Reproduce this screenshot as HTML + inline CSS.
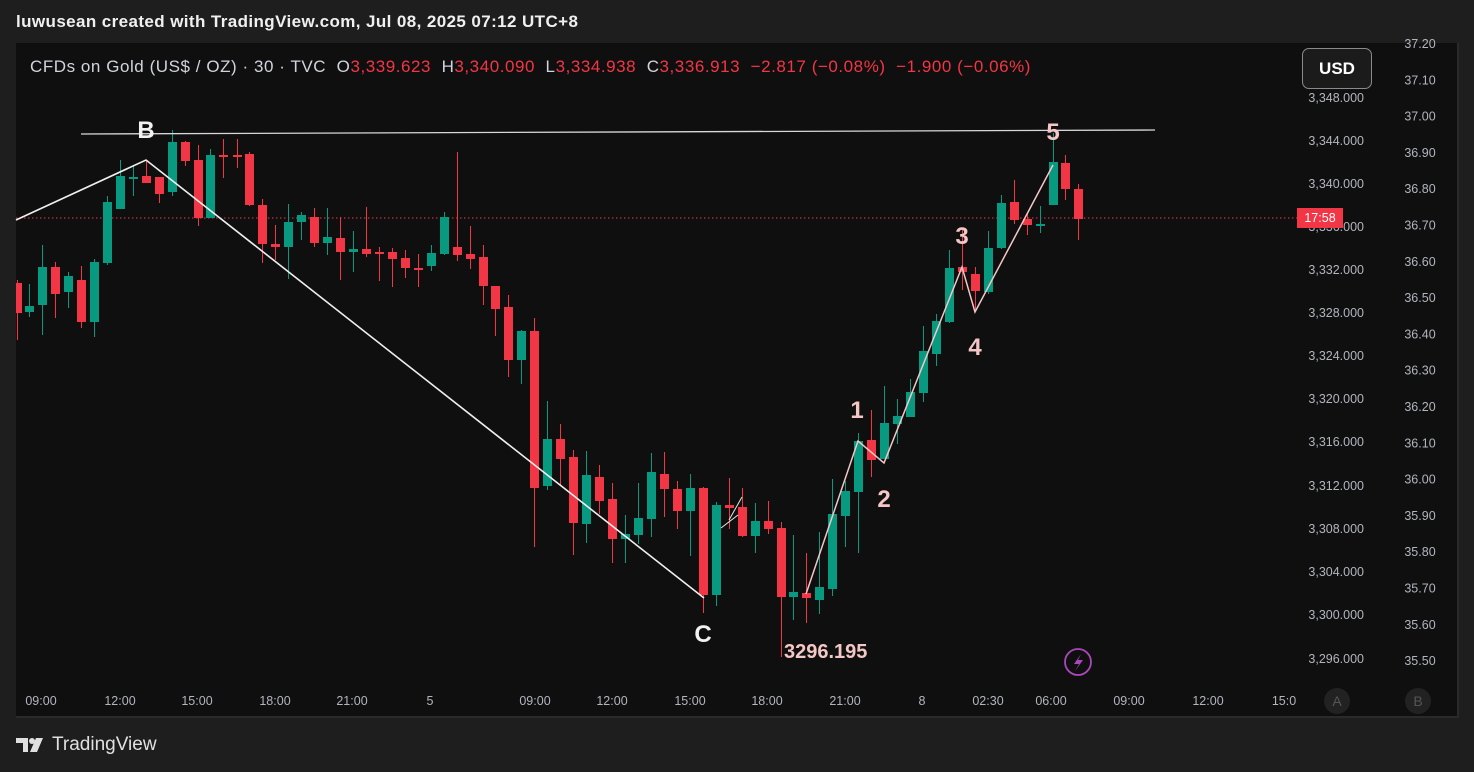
<!DOCTYPE html>
<html><head><meta charset="utf-8">
<style>
html,body{margin:0;padding:0;background:#1e1e1e;width:1474px;height:772px;overflow:hidden;font-family:"Liberation Sans",sans-serif}
#hdr{position:absolute;left:16px;top:12px;color:#f0f0f0;font-size:17px;font-weight:bold;letter-spacing:0.4px;white-space:nowrap}
#panel{position:absolute;left:16px;top:43px;width:1441px;height:673px;background:#0f0f0f;border-right:2px solid #2a2a2a;border-bottom:2px solid #2a2a2a}
#sym{position:absolute;left:30px;top:57px;color:#d1d4dc;font-size:17px;white-space:nowrap;letter-spacing:0.55px}
#sym .r{color:#f23645}
#usd{position:absolute;left:1302px;top:48px;width:68px;height:39px;border:1.5px solid #8a8a8a;border-radius:7px;background:#1b1b1b;color:#fff;font-weight:bold;font-size:17px;text-align:center;line-height:39px}
#logo{position:absolute;left:16px;top:734px;color:#e0e0e0;font-size:19px;display:flex;align-items:center;gap:6px}
svg{position:absolute;left:0;top:0}
</style></head><body>
<div id="hdr">luwusean created with TradingView.com, Jul 08, 2025 07:12 UTC+8</div>
<div id="panel"></div>
<svg id="s" width="1474" height="772" xmlns="http://www.w3.org/2000/svg"></svg>
<div id="sym">CFDs on Gold (US$ / OZ) · 30 · TVC &nbsp;O<span class="r">3,339.623</span> &nbsp;H<span class="r">3,340.090</span> &nbsp;L<span class="r">3,334.938</span> &nbsp;C<span class="r">3,336.913</span> &nbsp;<span class="r">−2.817 (−0.08%) &nbsp;−1.900 (−0.06%)</span></div>
<div id="usd">USD</div>
<div id="logo"><svg width="30" height="18" viewBox="0 0 30 18" style="position:static"><path d="M0 2h12v14H7V7H0z" fill="#e0e0e0"/><circle cx="16" cy="5" r="3" fill="#e0e0e0"/><path d="M20 2h7l-6 14h-7z" fill="#e0e0e0"/></svg><span>TradingView</span></div>
<script>
var G="#089981",R="#f23645";
var c=[
[17,'r',280,340,283,313],[29,'g',284,317,306,312],[42,'g',245,335,267,305],[55,'r',262,318,267,294],[68,'g',272,308,276,292],[81,'r',266,328,280,322],[94,'g',259,337,262,322],[107,'g',196,265,202,263],[120,'g',160,209,176,209],[133,'g',165,196,177,178],[146,'r',160,183,176,183],[159,'r',177,203,177,194],[172,'g',130,196,142,192],[185,'r',141,166,142,161],[198,'r',145,226,160,218],[210,'g',149,218,155,218],[223,'r',139,178,155,156],[237,'r',139,168,155,156],[249,'r',152,206,154,205],[262,'r',199,263,205,244],[275,'r',225,260,244,247],[288,'g',204,279,222,247],[301,'g',212,240,215,222],[314,'r',208,247,217,243],[327,'g',208,255,237,243],[340,'r',217,280,238,252],[353,'g',231,272,249,252],[366,'r',207,257,249,254],[379,'r',247,281,252,253],[392,'r',248,287,252,259],[405,'r',250,278,258,268],[418,'r',254,287,268,269],[431,'g',245,271,253,266],[444,'g',212,255,217,254],[457,'r',152,261,247,255],[470,'r',226,269,254,259],[483,'r',245,305,257,286],[495,'r',286,336,286,309],[508,'r',295,377,307,360],[521,'g',330,384,331,360],[534,'r',318,547,331,488],[547,'g',401,490,439,486],[560,'r',424,485,439,459],[573,'r',450,555,457,523],[586,'g',451,543,475,524],[599,'r',465,514,477,501],[612,'r',483,563,499,539],[625,'g',515,563,534,539],[638,'g',483,544,518,535],[651,'g',453,537,472,519],[664,'r',452,517,474,489],[677,'r',481,529,489,511],[690,'g',474,556,488,511],[703,'r',487,613,488,595],[716,'g',502,606,505,595],[729,'r',478,529,505,508],[742,'r',488,537,507,536],[755,'g',503,553,521,536],[768,'r',501,534,521,529],[781,'r',522,657,528,597],[793,'g',535,620,592,597],[806,'r',553,623,593,598],[819,'g',532,614,587,600],[832,'g',479,596,514,589],[845,'g',481,547,491,516],[858,'g',433,553,441,492],[871,'r',410,477,440,460],[884,'g',386,459,423,459],[897,'g',399,444,416,424],[910,'g',379,417,392,417],[923,'g',326,402,351,393],[936,'g',314,366,321,354],[949,'g',250,323,268,322],[962,'r',230,290,267,272],[975,'r',267,312,274,291],[988,'g',231,294,248,292],[1001,'g',195,249,203,248],[1014,'r',180,224,202,220],[1027,'r',213,235,219,225],[1040,'g',206,233,224,225],[1053,'g',133,205,162,205],[1065,'r',155,200,163,189],[1078,'r',184,240,189,219]];
var h='';
function t(x,y,s,f,sz,a,w){h+='<text x="'+x+'" y="'+y+'" fill="'+f+'" font-size="'+sz+'" font-family="Liberation Sans, sans-serif" text-anchor="'+(a||'start')+'"'+(w?' font-weight="bold"':'')+'>'+s+'</text>';}
h+='<line x1="16" y1="218" x2="1298" y2="218" stroke="#f23645" stroke-width="1" stroke-dasharray="1.5 2.5"/>';
c.forEach(function(k){var col=k[1]=='g'?G:R;var x=k[0];var lw=x<20?6:9;
h+='<line x1="'+(x+0.5)+'" y1="'+k[2]+'" x2="'+(x+0.5)+'" y2="'+k[3]+'" stroke="'+col+'" stroke-width="1"/>';
var bx=x<20?16:x-4;h+='<rect x="'+bx+'" y="'+k[4]+'" width="'+lw+'" height="'+Math.max(2,k[5]-k[4])+'" fill="'+col+'"/>';});
h+='<line x1="81" y1="134" x2="1155" y2="130" stroke="#d8d8d8" stroke-width="1.3"/>';
h+='<polyline points="16,220 146,160 704,598" fill="none" stroke="#f0f0f0" stroke-width="1.6"/>';
h+='<polyline points="721,528 738,515" fill="none" stroke="#e8e8e8" stroke-width="1"/><polyline points="729,520 742,497" fill="none" stroke="#e8e8e8" stroke-width="1"/>';
h+='<polyline points="806,594 858,441 884,463 962,267 975,312 1053,165" fill="none" stroke="#f5c6c6" stroke-width="1.5"/>';
t(146,138,'B','#f2f2f2',24,'middle',1);t(703,642,'C','#f2f2f2',24,'middle',1);
t(857,418,'1','#f5c6c6',24,'middle',1);t(884,507,'2','#f5c6c6',24,'middle',1);t(962,244,'3','#f5c6c6',24,'middle',1);t(975,355,'4','#f5c6c6',24,'middle',1);t(1053,140,'5','#f5c6c6',24,'middle',1);
t(784,658,'3296.195','#f5c6c6',20,'start',1);
h+='<circle cx="1078" cy="662" r="13" fill="none" stroke="#ab47bc" stroke-width="1.8"/><path d="M1081 654 L1074 664 L1079 664 L1075 671 L1083 660 L1078 660 Z" fill="#ab47bc"/>';
var p=[['3,348.000',98],['3,344.000',141],['3,340.000',184],['3,336.000',227],['3,332.000',270],['3,328.000',313],['3,324.000',356],['3,320.000',399],['3,316.000',442],['3,312.000',486],['3,308.000',529],['3,304.000',572],['3,300.000',615],['3,296.000',659]];
p.forEach(function(q){t(1364,q[1]+4,q[0],'#b2b5be',12.5,'end');});
var v=['37.20','37.10','37.00','36.90','36.80','36.70','36.60','36.50','36.40','36.30','36.20','36.10','36.00','35.90','35.80','35.70','35.60','35.50'];
v.forEach(function(s,i){t(1420,44+i*36.3+4,s,'#b2b5be',12.5,'middle');});
h+='<rect x="1297" y="208" width="46" height="20" fill="#f23645"/>';t(1320,222,'17:58','#fff',12.5,'middle');
var tm=[['09:00',41],['12:00',120],['15:00',197],['18:00',275],['21:00',352],['5',430],['09:00',535],['12:00',612],['15:00',690],['18:00',767],['21:00',845],['8',922],['02:30',988],['06:00',1051],['09:00',1129],['12:00',1208],['15:0',1284]];
tm.forEach(function(q){t(q[1],705,q[0],'#b2b5be',12.5,'middle');});
h+='<circle cx="1337" cy="701" r="13" fill="#222"/><circle cx="1418" cy="701" r="13" fill="#222"/>';t(1337,706,'A','#555',14,'middle');t(1418,706,'B','#555',14,'middle');
document.getElementById('s').innerHTML=h;
</script>
</body></html>
